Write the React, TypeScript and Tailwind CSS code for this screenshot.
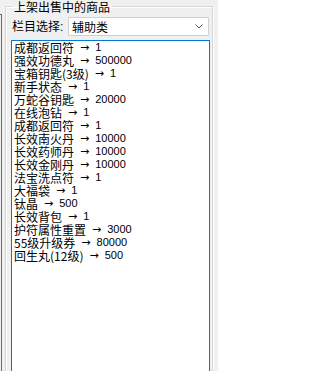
const items: [string, string][] = [
  ["成都返回符", "1"],
  ["强效功德丸", "500000"],
  ["宝箱钥匙(3级)", "1"],
  ["新手状态", "1"],
  ["万蛇谷钥匙", "20000"],
  ["在线泡钻", "1"],
  ["成都返回符", "1"],
  ["长效南火丹", "10000"],
  ["长效药师丹", "10000"],
  ["长效金刚丹", "10000"],
  ["法宝洗点符", "1"],
  ["大福袋", "1"],
  ["钛晶", "500"],
  ["长效背包", "1"],
  ["护符属性重置", "3000"],
  ["55级升级券", "80000"],
  ["回生丸(12级)", "500"],
];

export default function App() {
  return (
    <div className="flex h-[371px] w-[218px] overflow-hidden bg-[#f0f0f0] font-['Noto_Sans_CJK_SC','Liberation_Sans',sans-serif] text-[12px] leading-[13px] text-black">
      {/* edge of the neighbouring control */}
      <div className="mt-[14px] h-[400px] w-[2px] shrink-0 border-r border-t border-[#6b6b6b]" />

      <fieldset className="ml-[3px] h-[400px] w-[208px] shrink-0 border border-[#d6d6d6] shadow-[inset_1px_1px_0_#ffffff,1px_1px_0_#ffffff]">
        <legend className="ml-[6px] px-[2px] pt-[1px] leading-[12px]">上架出售中的商品</legend>

        <div className="mt-[4px] flex h-[19px] items-center">
          <span className="pl-[6px]">
            栏目选择<span className="font-['Liberation_Sans',sans-serif]">:</span>
          </span>
          <div className="ml-auto mr-[3px] flex h-[19px] w-[141px] items-center rounded-[1px] border border-[#d0d0d0] bg-white pl-[3px] pr-[5px]">
            <span>辅助类</span>
            <svg className="ml-auto" width="8" height="5" viewBox="0 0 8 5">
              <polyline points="0.5,0.5 4,4 7.5,0.5" fill="none" stroke="#5a5a5a" strokeWidth="1" />
            </svg>
          </div>
        </div>

        <ul className="ml-[5px] mt-[4px] h-[340px] w-[199px] border border-[#0078d7] bg-white pl-[2px]">
          {items.map(([name, value], i) => (
            <li key={i} className="flex h-[13px] items-center whitespace-nowrap">
              <span>{name}</span>
              <span className="ml-[6px] mr-[6px] font-['DejaVu_Sans',sans-serif] text-[11px]">→</span>
              <span className="font-['Liberation_Sans',sans-serif] text-[11px]">{value}</span>
            </li>
          ))}
        </ul>
      </fieldset>
    </div>
  );
}
